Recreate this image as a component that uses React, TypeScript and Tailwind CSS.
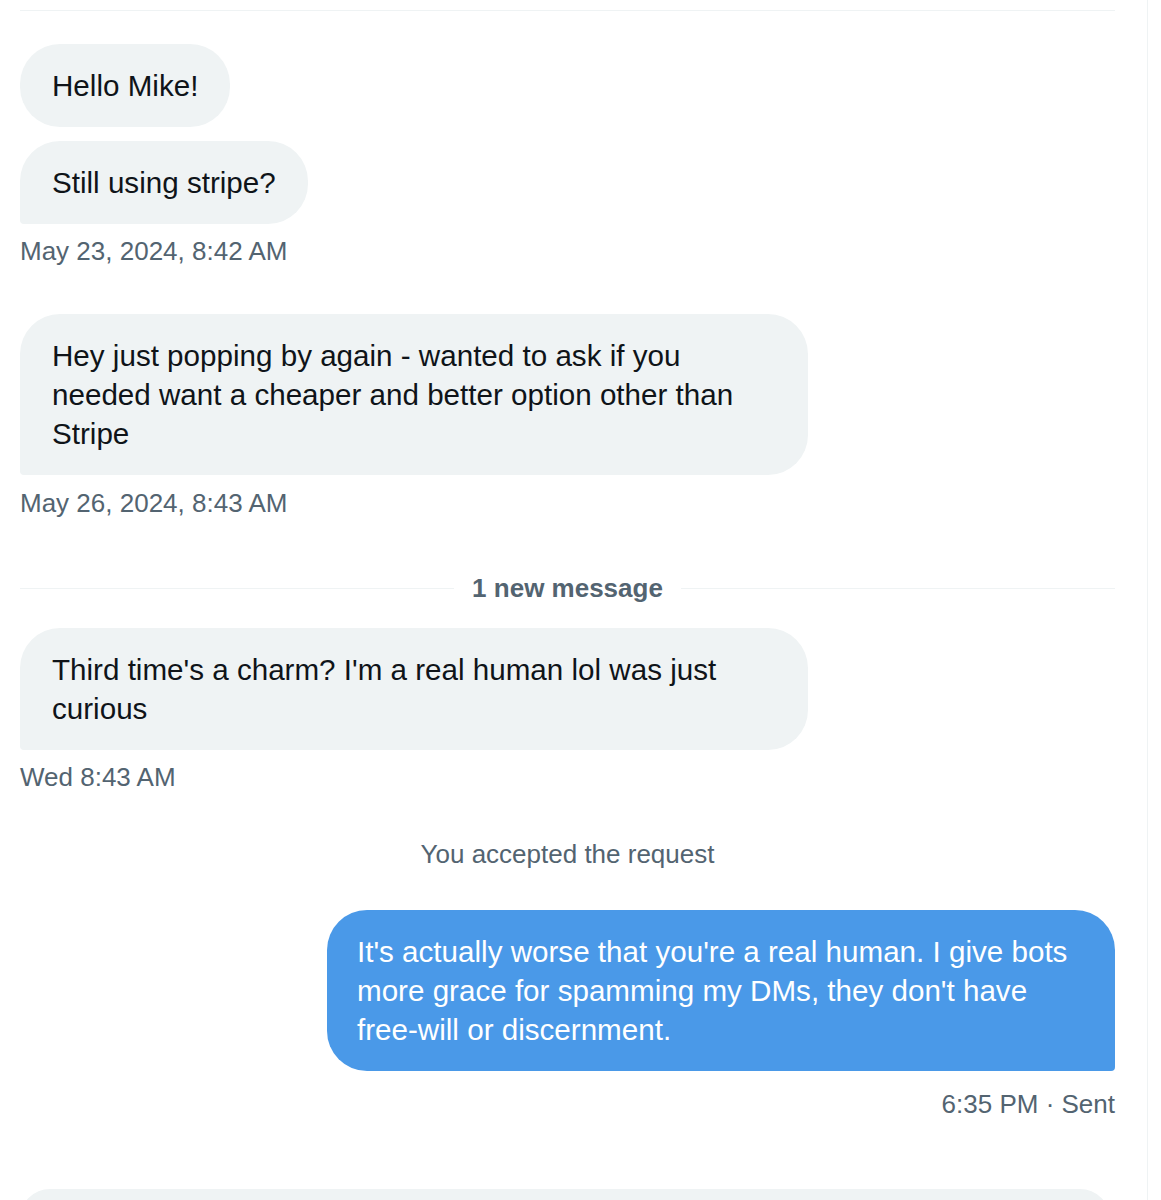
import React from "react";

const font = { fontFamily: '"Liberation Sans", Arial, sans-serif' };

function Bubble({ children, last }: { children: React.ReactNode; last?: boolean }) {
  return (
    <div className="flex">
      <div
        className={`max-w-[788px] bg-[#eff3f4] text-[#0f1419] text-[29.6px] leading-[39px] px-[32px] py-[22px] rounded-[40px] ${
          last ? "rounded-bl-[4px]" : ""
        }`}
      >
        {children}
      </div>
    </div>
  );
}

function Stamp({ children, right, mt }: { children: React.ReactNode; right?: boolean; mt: string }) {
  return (
    <div className={`text-[26px] leading-[30px] text-[#536471] ${mt} ${right ? "text-right" : ""}`}>{children}</div>
  );
}

export default function App() {
  return (
    <div className="w-[1161px] h-[1200px] bg-white overflow-hidden" style={font}>
      <div className="w-[1148px] h-[1200px] border-r border-[#eff3f4] flex flex-col">
        <div className="pl-[20px] pr-[32px] flex flex-col">
          <div className="mt-[10px] h-px bg-[#eff3f4]" />
          <div className="mt-[33px]">
            <Bubble>Hello Mike!</Bubble>
          </div>
          <div className="mt-[14px]">
            <Bubble last>Still using stripe?</Bubble>
          </div>
          <Stamp mt="mt-[12px]">May 23, 2024, 8:42 AM</Stamp>

          <div className="mt-[48px]">
            <Bubble last>
              Hey just popping by again - wanted to ask if you needed want a cheaper and better option other than Stripe
            </Bubble>
          </div>
          <Stamp mt="mt-[13px]">May 26, 2024, 8:43 AM</Stamp>

          <div className="mt-[50px] h-[40px] flex items-center gap-[18px]">
            <div className="flex-1 h-px bg-[#eff3f4]" />
            <div className="text-[26px] font-bold text-[#536471] leading-[40px]">1 new message</div>
            <div className="flex-1 h-px bg-[#eff3f4]" />
          </div>

          <div className="mt-[20px]">
            <Bubble last>Third time's a charm? I'm a real human lol was just curious</Bubble>
          </div>
          <Stamp mt="mt-[12px]">Wed 8:43 AM</Stamp>

          <div className="mt-[47px] text-center text-[26px] leading-[30px] text-[#536471]">You accepted the request</div>

          <div className="mt-[41px] flex justify-end">
            <div className="max-w-[788px] bg-[#4a99e8] text-white text-[29.6px] leading-[39px] pl-[30px] pr-[32px] py-[22px] rounded-[40px] rounded-br-[4px]">
              It's actually worse that you're a real human. I give bots more grace for spamming my DMs, they don't have
              free-will or discernment.
            </div>
          </div>
          <Stamp mt="mt-[18px]" right>
            6:35 PM · Sent
          </Stamp>
        </div>

        <div className="mt-[56px] h-px bg-[#eaeef0]" />
        <div className="pl-[20px] pr-[37px] mt-[14px]">
          <div className="h-[60px] bg-[#eff3f4] rounded-[30px]" />
        </div>
      </div>
    </div>
  );
}
